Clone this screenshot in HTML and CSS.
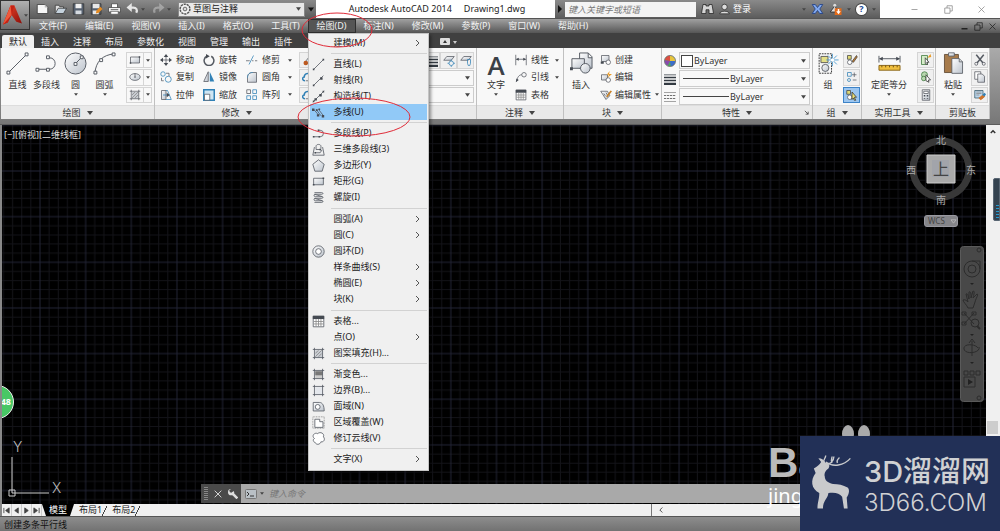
FILE: index.html
```html
<!DOCTYPE html>
<html lang="zh-CN">
<head>
<meta charset="utf-8">
<meta name="viewport" content="width=device-width, initial-scale=1">
<title>Autodesk AutoCAD 2014 Drawing1.dwg</title>
<link rel="stylesheet" href="styles.css">
</head>
<body>
<svg class="defs" aria-hidden="true">
  <defs>
    <linearGradient id="steel" x1="0" y1="0" x2="1" y2="1"><stop offset="0" stop-color="#fff"/><stop offset="1" stop-color="#bcc3cc"/></linearGradient>
    <linearGradient id="red" x1="0" y1="0" x2="1" y2="1"><stop offset="0" stop-color="#f0492c"/><stop offset="1" stop-color="#8a0d08"/></linearGradient>
    <symbol id="line" viewBox="0 0 16 16"><path d="M2 14 14 2" class="k"/><path d="M1 13h2v2H1zM13 1h2v2h-2z" class="n"/></symbol>
    <symbol id="bigline" viewBox="0 0 24 24"><path d="M3 21 21 3" class="k"/><path d="M1 20h3v3H1zM20 1h3v3h-3z" class="k w"/></symbol>
    <symbol id="bigpline" viewBox="0 0 24 24"><path d="M3 18h12c8 0 8-12 0-12h-1" class="k"/><path d="M1 17h3v3H1zM12 17h3v3h-3zM12 4h3v3h-3z" class="k w"/></symbol>
    <symbol id="ray" viewBox="0 0 16 16"><path d="M2 14 14 2" class="k"/><path d="M1 13h2v2H1zM10 4h3v3h-3z" class="n"/></symbol>
    <symbol id="xline" viewBox="0 0 16 16"><path d="M1 15 15 1" class="k"/><path d="M3 10h3v3H3zM9 5h3v3H9zM1 13h2v2H1zM13 1h2v2h-2z" class="n"/></symbol>
    <symbol id="mline" viewBox="0 0 16 16"><path d="M2 4l6 7M8 4l6 8M5 4l6 8" class="k"/><path d="M0 3h3v3H0zM5 4h2v2H5zM8 3h2v2H8zM6 10h3v3H6zM12 11h3v3h-3z" class="n"/></symbol>
    <symbol id="pline" viewBox="0 0 16 16"><path d="M2 12h8a4 4 0 0 0 0-8H8" class="k"/><path d="M1 11h2v2H1zM8 11h2v2H8zM7 3h2v2H7z" class="n"/></symbol>
    <symbol id="poly3d" viewBox="0 0 16 16"><path d="M3 5 1 15h14L13 5" class="k"/><path d="M4 12h6l2-3-3-1H5V4c0-3 6-3 6 0v3" class="k"/><path d="M3 11h2v2H3zM9 7h2v2H9z" class="n"/></symbol>
    <symbol id="polygon" viewBox="0 0 16 16"><path d="m8 1 7 5.500-2.500 8.500h-9L1 6.500z" class="k s"/></symbol>
    <symbol id="rect" viewBox="0 0 16 16"><path d="M2 4h12v8H2z" class="k s"/><path d="M1 11h2v2H1zM13 3h2v2h-2z" class="n"/></symbol>
    <symbol id="helix" viewBox="0 0 16 16"><path d="M3 2h9c2 0 2 2 0 2H4c-2 0-2 3 0 3h8c2 0 2 2 0 2H4c-2 0-2 3 0 3h8c2 0 2 2 0 2H3M3 4l10 3M3 9l10 3" class="k"/></symbol>
    <symbol id="donut" viewBox="0 0 16 16"><circle cx="8" cy="8" r="7" class="k s"/><circle cx="8" cy="8" r="3.500" class="k w"/></symbol>
    <symbol id="table" viewBox="0 0 16 16"><path d="M1.500 1.500h13v13h-13z" class="k w"/><path d="M1 1h14v4H1z" class="n"/><path d="M2 8h12M2 11h12M5 5v9M8 5v9M11 5v9" class="k t"/></symbol>
    <symbol id="hatch" viewBox="0 0 16 16"><path d="M4 4h9v9H4z" fill="#c8ccd2"/><path d="M1 3h14M1 13h14M3 1v14M13 1v14" class="k"/><path d="m4 8 4-4M4 12l8-8M8 12l4-4" class="k t"/></symbol>
    <symbol id="gradient" viewBox="0 0 16 16"><path d="M4 4h9v9H4z" fill="#ccc"/><path d="M4 4h9v5H4z" fill="#777"/><path d="M1 3h14M1 13h14M3 1v14M13 1v14" class="k"/></symbol>
    <symbol id="boundary" viewBox="0 0 16 16"><path d="M4 4h9v9H4z" fill="#e4e7ec"/><path d="M1 3h14M1 13h14M3 1v14M13 1v14" class="k"/></symbol>
    <symbol id="region" viewBox="0 0 16 16"><path d="M1.500 13.500V3H9c4 0 6 4 6 10.500z" class="k s"/><circle cx="7" cy="8.500" r="3" class="k w"/></symbol>
    <symbol id="wipe" viewBox="0 0 16 16"><path d="M1 1h14v14H1z" fill="none" stroke="#777" stroke-dasharray="1 1"/><path d="M3.500 4h6v3h4v7h-10z" class="k w"/></symbol>
    <symbol id="cloud" viewBox="0 0 16 16"><path d="M3 8C-1 5 3 0 7 2c3-3 9 0 7 4 3 3 0 7-3 6-1 4-6 4-7 1-3-1-3-4-1-5z" class="k w"/></symbol>
    <symbol id="bcloud" viewBox="0 0 16 16"><path d="M4 13C0 13 0 8 3 8c0-5 6-6 8-3 3 0 4 2 4 4" class="bl b2"/><path d="M5 13h8" class="k"/></symbol>
    <symbol id="circle" viewBox="0 0 24 24"><circle cx="12" cy="12" r="11" class="k s"/><path d="m12 12 6-6" class="k"/><path d="M10.500 11h3v3h-3zM17 4h3v3h-3z" class="k w"/></symbol>
    <symbol id="arc" viewBox="0 0 24 24"><path d="M2 22C3 10 10 3 22 2" class="k"/><path d="M1 20h3v3H1zM7 7h3v3H7zM20 1h3v3h-3z" class="k w"/></symbol>
    <symbol id="ellipse" viewBox="0 0 16 16"><ellipse cx="8" cy="8" rx="7" ry="4.500" class="k s"/><path d="M8 3v6M7 8h2" class="k"/></symbol>
    <symbol id="move" viewBox="0 0 16 16"><path d="M8 2v12M2 8h12" class="k"/><path d="m8 0 3 4H5zM8 16l3-4H5zM0 8l4-3v6zM16 8l-4-3v6z" class="n"/></symbol>
    <symbol id="rotate" viewBox="0 0 16 16"><path d="M5 3a6.500 6.500 0 1 0 6 0" class="k b2"/><path d="M4 0v6l5-3z" class="n"/></symbol>
    <symbol id="trim" viewBox="0 0 16 16"><path d="M0 9h5M8 9h2M12 9h3" class="k"/><path d="m4 14 6-12" class="bl"/></symbol>
    <symbol id="copy" viewBox="0 0 16 16"><circle cx="4" cy="4" r="3" class="bl"/><circle cx="11" cy="11" r="4" class="bl"/><path d="M8 3h4v4M2 9v4h3" class="k"/></symbol>
    <symbol id="mirror" viewBox="0 0 16 16"><path d="M7 1v13H1z" class="k s"/><path d="M9 1v13h6z" fill="#3181b6"/></symbol>
    <symbol id="fillet" viewBox="0 0 16 16"><path d="M2 15V9c0-5 3-7 7-7h5v13z" class="k s"/><path d="M2 9c0-5 3-7 7-7" class="bl"/></symbol>
    <symbol id="stretch" viewBox="0 0 16 16"><path d="M2 2h6v12H2z" class="k s"/><path d="M8 2h2l5 12H8M4 8h7" class="bl"/><path d="m9 5 4 3-4 3z" class="n"/></symbol>
    <symbol id="scale" viewBox="0 0 16 16"><path d="M1 1h14v14H1z" fill="#cfe6f4" stroke="#3181b6" stroke-width="2"/><path d="M2 7h7v8H2z" class="k w"/></symbol>
    <symbol id="array" viewBox="0 0 16 16"><path d="M1 1h5v5H1z" class="k"/><path d="M9 1h5v5H9zM1 9h5v5H1zM9 9h5v5H9z" class="bl"/></symbol>
    <symbol id="dim" viewBox="0 0 16 16"><path d="M1 1v14M15 1v14M2 7h12" class="k"/><path d="m1 7 4-2v4zM15 7l-4-2v4z" class="n"/></symbol>
    <symbol id="leader" viewBox="0 0 16 16"><path d="M2 14C3 9 5 5 9 5" class="k"/><circle cx="12" cy="5" r="3" class="k"/><path d="m1 15 1-5 3 2z" class="n"/></symbol>
    <symbol id="insert" viewBox="0 0 24 24"><path d="M10 1h9l4 4v12H10zM19 1v5h4" class="k s"/><path d="M2 7h13v10H2z" class="k s"/><circle cx="16" cy="17" r="5" class="k s"/><path d="M8 12h4M0 16h3v3H0z" class="n"/></symbol>
    <symbol id="create" viewBox="0 0 16 16"><path d="M2 2h10v8H2z" class="k s"/><circle cx="11" cy="11" r="3" class="k w"/><path d="M1 10h4v3H1z" class="n"/></symbol>
    <symbol id="edit" viewBox="0 0 16 16"><path d="M2 5h8v7H2z" class="k s"/><circle cx="11" cy="12" r="3" class="k w"/><path d="m13 0-4 5h3l-2 4 6-5h-4z" fill="#e99a23"/></symbol>
    <symbol id="attr" viewBox="0 0 16 16"><path d="m1 3 7 11 5-5-3-6z" class="k s"/><path d="m5 6 2 3M8 5l2 3" class="k"/><path d="m8 10 6-8 2 1-6 8z" fill="#c98228"/></symbol>
    <symbol id="wheel" viewBox="0 0 16 16"><circle cx="8" cy="8" r="7" fill="#4ea75d"/><path d="M8 8V1a7 7 0 0 1 7 7z" fill="#e9c43c"/><path d="M8 8h7a7 7 0 0 1-6 7z" fill="#3c6dcc"/><path d="M8 8V1a7 7 0 0 0-7 6z" fill="#dd4f41"/><path d="M8 8 1 7a7 7 0 0 0 4 7z" fill="#8a4aad"/><circle cx="8" cy="8" r="7.500" fill="none" stroke="#666"/></symbol>
    <symbol id="weights" viewBox="0 0 16 16"><path d="M0 2h16v1H0zM0 5h16v2H0zM0 9h16v2H0zM0 13h16v3H0z" fill="#333a42"/></symbol>
    <symbol id="types" viewBox="0 0 16 16"><path d="M0 2h16M0 14h16" class="k t"/><path d="M0 6h16M0 10h16" stroke="#444" stroke-dasharray="3 1"/></symbol>
    <symbol id="group" viewBox="0 0 24 26"><path d="M2 2h14v22H2z" fill="none" stroke="#222" stroke-dasharray="2 1"/><path d="M4 5h8v7H4z" fill="#e3df87" stroke="#555"/><circle cx="9" cy="18" r="4" class="k s"/><path d="m17 2 0 14M10 9h14M12 4l10 10M22 4 12 14" stroke="#4a9bd1"/><circle cx="17" cy="9" r="2" fill="#fff"/></symbol>
    <symbol id="gedit" viewBox="0 0 16 16"><path d="M2 2h5v5H2z" fill="#dfd976" stroke="#444"/><circle cx="5" cy="11" r="3" class="k w"/><path d="m8 10 6-8 1 2-5 7z" fill="#c37b27" stroke="#444"/></symbol>
    <symbol id="gplus" viewBox="0 0 16 16"><path d="M2 2h5v5H2z" class="bl"/><circle cx="4" cy="12" r="2" class="bl"/><path d="M11 2v6M8 5h6M9 12h5" class="k"/></symbol>
    <symbol id="gpick" viewBox="0 0 16 16"><path d="M1 2h5v5H1z" fill="#dfd976" stroke="#444"/><circle cx="5" cy="11" r="3" class="k w"/><path d="m8 4 6 7-3 0 2 4-2 0-1-3-2 2z" fill="#eee073" stroke="#333"/></symbol>
    <symbol id="measure" viewBox="0 0 24 16"><path d="M1 0v7M23 0v7M2 3h20" class="k"/><path d="m1 3 4-2v4zM23 3l-4-2v4z" class="n"/><path d="M1 10h22v5H1z" fill="#f0bf3e" stroke="#8a6518"/><path d="M4 10v2M8 10v2M12 10v2M16 10v2M20 10v2" stroke="#6f5217"/></symbol>
    <symbol id="qselect" viewBox="0 0 16 16"><path d="M2 2h8v12H2z" fill="#d6edc9" stroke="#39763a"/><path d="m7 5 5 6H9l1 3-3-1z" fill="#fff" stroke="#333"/><path d="m10 5 4-5 1 4z" fill="#e99a23"/></symbol>
    <symbol id="similar" viewBox="0 0 16 16"><circle cx="6" cy="5" r="4" fill="#b8d7af" stroke="#39763a"/><circle cx="5" cy="10" r="3" fill="#b8d7af" stroke="#39763a"/><path d="m8 5 6 7h-3l1 3-4-2z" fill="#fff" stroke="#333"/></symbol>
    <symbol id="calc" viewBox="0 0 16 16"><path d="M3 1h10v14H3z" class="k s"/><path d="M5 3h6v3H5z" class="k w"/><path d="M5 8h2v2H5zM9 8h2v2H9zM5 12h2v1H5zM9 12h2v1H9z" class="n"/></symbol>
    <symbol id="paste" viewBox="0 0 24 28"><path d="M1 3h17v22H1z" fill="#a77b4b" stroke="#5c4630"/><path d="M6 1h7v4H6z" class="k s"/><path d="M10 8h9l4 4v14H10zM19 8v4h4" class="k s"/></symbol>
    <symbol id="cut" viewBox="0 0 16 16"><path d="m3 1 9 11M13 1 4 12" class="k b2"/><circle cx="3" cy="13" r="2" class="k"/><circle cx="13" cy="13" r="2" class="k"/></symbol>
    <symbol id="pages" viewBox="0 0 16 16"><path d="M1 1h8v10H1z" class="k w"/><path d="M5 4h6l3 3v8H5z" class="k s"/></symbol>
    <symbol id="match" viewBox="0 0 16 16"><path d="M1 2h11v10H1z" fill="#bcd7ed" stroke="#356"/><path d="M3 4h7M3 6h7M3 8h4" class="k t"/><path d="m6 12 5-4 4 2-6 5z" fill="#d0742b"/><path d="m11 8 3-3 2 2-2 3z" fill="#3181b6"/></symbol>
    <symbol id="laygear" viewBox="0 0 16 16"><path d="m1 7 4-5h10l-4 5z" class="k s"/><circle cx="11" cy="11" r="3" class="bl"/><path d="M11 6v2M11 14v2M6 11h2M14 11h2" class="bl"/></symbol>
    <symbol id="laybulb" viewBox="0 0 16 16"><path d="m1 7 4-5h10l-4 5z" class="k s"/><path d="M10 6h4v5l-1 3h-2l-1-3z" class="bl"/></symbol>
    <symbol id="gear" viewBox="0 0 16 16"><circle cx="8" cy="8" r="6.500" fill="#f2f2f2" stroke="#555" stroke-width="2" stroke-dasharray="3 1"/><circle cx="8" cy="8" r="2.500" fill="#ddd" stroke="#444"/></symbol>
    <symbol id="new" viewBox="0 0 16 16"><path d="M1 2h10l4 4v8H1z" fill="#f6f6f6" stroke="#333"/><path d="M11 2v4h4" fill="#bbb"/></symbol>
    <symbol id="open" viewBox="0 0 16 16"><path d="M1 14V3h5l1 2h5v3" fill="#ddd" stroke="#333"/><path d="m1 14 4-7h11l-4 7z" fill="#c5d2dd" stroke="#333"/></symbol>
    <symbol id="save" viewBox="0 0 16 16"><path d="M1 1h14v14H1z" fill="#56606f" stroke="#333"/><path d="M4 1h8v6H4z" fill="#f0f0f0"/><path d="M4 10h8v5H4z" fill="#d5dae0"/></symbol>
    <symbol id="saveas" viewBox="0 0 16 16"><path d="M1 1h13v14H1z" fill="#56606f" stroke="#333"/><path d="M3 1h9v6H3zM3 10h8v5H3z" fill="#e8e8e8"/><path d="m7 14 1-4 5-5 3 3-5 5z" fill="#e48b22"/></symbol>
    <symbol id="print" viewBox="0 0 16 16"><path d="M4 1h8v6H4z" fill="#fff" stroke="#444"/><path d="M0 6h16v6H0z" fill="#eee" stroke="#444"/><path d="M3 8h10v1H3z" fill="#555"/><path d="M3 11h10v4H3z" fill="#fff" stroke="#555"/></symbol>
    <symbol id="undo" viewBox="0 0 16 16"><path d="M4 6h5c4 0 6 3 4 7" fill="none" stroke="#e6e6e6" stroke-width="3"/><path d="M0 6 7 0v12z" fill="#e6e6e6"/></symbol>
    <symbol id="find" viewBox="0 0 16 16"><path d="M2 2h4v2h4V2h4l2 12h-6V9H6v5H0z" fill="#d5d5d5" stroke="#222"/></symbol>
    <symbol id="user" viewBox="0 0 16 16"><circle cx="8" cy="5" r="4" fill="#ddd" stroke="#222"/><path d="M1 15c0-5 14-5 14 0z" fill="#ddd" stroke="#222"/></symbol>
    <symbol id="exchange" viewBox="0 0 16 16"><path d="M1 2h4l3 4 3-4h4l-4 6 4 6h-4l-3-4-3 4H1l4-6z" fill="#82a9ed" stroke="#173781"/></symbol>
    <symbol id="app360" viewBox="0 0 16 16"><path d="m1 12 6-8 5 8z" fill="#ddd" stroke="#222"/><circle cx="7" cy="3" r="2" fill="#ddd"/><path d="M7 7h9v9H7z" fill="#e46b19"/><path d="M11 8h2v3h2l-3 4-3-4h2z" fill="#fff"/></symbol>
    <symbol id="brush" viewBox="0 0 16 16"><path d="m3 12 8-10 3 2-8 10z" class="k s"/><circle cx="5" cy="12" r="3" fill="#bd5a20"/></symbol>
    <symbol id="wrench" viewBox="0 0 16 16"><path d="m6 6 9 9" stroke="#ddd" stroke-width="4"/><path d="M5 0a5 5 0 1 0 5 5L9 3 6 6 3 5 2 2z" fill="#ddd"/></symbol>
    <symbol id="down" viewBox="0 0 6 4"><path d="M0 0h6L3 4z" fill="currentColor"/></symbol>
    <symbol id="chev" viewBox="0 0 6 8"><path d="m1 1 3 3-3 3" fill="none" stroke="#555"/></symbol>
    <symbol id="restore" viewBox="0 0 12 12"><path d="M1 4h7v7H1zM4 4V1h7v7H8" fill="none" stroke="currentColor"/></symbol>
    <symbol id="x" viewBox="0 0 12 12"><path d="m2 2 8 8M10 2l-8 8" fill="none" stroke="currentColor"/></symbol>
    <pattern id="grid" x="37" y="45" width="45.650" height="45.650" patternUnits="userSpaceOnUse">
      <path d="M10.100 0v46M19.300 0v46M28.400 0v46M37.500 0v46M0 10.100h46M0 19.300h46M0 28.400h46M0 37.500h46" stroke="#131318"/>
      <path d="M1 0v46M0 1h46" stroke="#222435"/>
    </pattern>
  </defs>
</svg>

<div class="app">
  <header class="titlebar">
    <div class="quick">
      <button class="appbtn" aria-label="应用程序菜单"><svg viewBox="0 0 20 20"><path d="M8 0h4l8 19-6-2-5-7-4 8-5 2z" fill="url(#red)"/><path d="M8 0h4L9 10l-4 8-5 2z" fill="#c52214"/><path d="m8 0 1 10-9 10z" fill="#ee5a3c"/></svg><svg class="dn"><use href="#down"/></svg></button>
      <button class="ico" aria-label="新建"><svg><use href="#new"/></svg></button>
      <button class="ico" aria-label="打开"><svg><use href="#open"/></svg></button>
      <button class="ico" aria-label="保存"><svg><use href="#save"/></svg></button>
      <button class="ico" aria-label="另存为"><svg><use href="#saveas"/></svg></button>
      <button class="ico" aria-label="打印"><svg><use href="#print"/></svg></button>
      <button class="ico" aria-label="放弃"><svg><use href="#undo"/></svg></button>
      <svg class="dn"><use href="#down"/></svg>
      <button class="ico redo" aria-label="重做"><svg><use href="#undo"/></svg></button>
      <svg class="dn"><use href="#down"/></svg>
      <div class="combo workspace"><select aria-label="工作空间"><option>草图与注释</option></select><svg class="lead"><use href="#gear"/></svg><svg class="dn"><use href="#down"/></svg></div>
      <svg class="dn more"><use href="#down"/></svg>
    </div>
    <h1 class="title"><span>Autodesk AutoCAD 2014</span><span>Drawing1.dwg</span></h1>
    <div class="info">
      <svg class="play" viewBox="0 0 6 8"><path d="m1 0 4 4-4 4z" fill="#111"/></svg>
      <input class="search" type="text" aria-label="搜索" placeholder="键入关键字或短语">
      <button class="ico" aria-label="查找"><svg><use href="#find"/></svg></button>
      <button class="login"><svg><use href="#user"/></svg>登录</button>
      <svg class="dn push"><use href="#down"/></svg>
      <button class="ico" aria-label="Exchange"><svg><use href="#exchange"/></svg></button>
      <button class="ico" aria-label="Autodesk 360"><svg><use href="#app360"/></svg></button>
      <svg class="dn"><use href="#down"/></svg>
      <button class="help" aria-label="帮助">?</button>
      <svg class="dn"><use href="#down"/></svg>
    </div>
    <div class="win">
      <button aria-label="最小化"><svg viewBox="0 0 12 12"><path d="M2 6h8" stroke="currentColor"/></svg></button>
      <button aria-label="还原"><svg><use href="#restore"/></svg></button>
      <button aria-label="关闭"><svg><use href="#x"/></svg></button>
    </div>
  </header>

  <nav class="menubar">
    <button>文件(F)</button><button>编辑(E)</button><button>视图(V)</button><button>插入(I)</button><button>格式(O)</button><button>工具(T)</button>
    <div class="holder">
      <button class="open" aria-expanded="true">绘图(D)</button>
      <div class="popup" role="menu">
        <div class="grp"><button>建模(M)<svg class="ch"><use href="#chev"/></svg></button></div>
        <div class="grp">
          <button><svg><use href="#line"/></svg>直线(L)</button>
          <button><svg><use href="#ray"/></svg>射线(R)</button>
          <button><svg><use href="#xline"/></svg>构造线(T)</button>
          <button class="hot"><svg><use href="#mline"/></svg>多线(U)</button>
        </div>
        <div class="grp">
          <button><svg><use href="#pline"/></svg>多段线(P)</button>
          <button><svg><use href="#poly3d"/></svg>三维多段线(3)</button>
          <button><svg><use href="#polygon"/></svg>多边形(Y)</button>
          <button><svg><use href="#rect"/></svg>矩形(G)</button>
          <button><svg><use href="#helix"/></svg>螺旋(I)</button>
        </div>
        <div class="grp loose">
          <button>圆弧(A)<svg class="ch"><use href="#chev"/></svg></button>
          <button>圆(C)<svg class="ch"><use href="#chev"/></svg></button>
          <button><svg><use href="#donut"/></svg>圆环(D)</button>
          <button>样条曲线(S)<svg class="ch"><use href="#chev"/></svg></button>
          <button>椭圆(E)<svg class="ch"><use href="#chev"/></svg></button>
          <button>块(K)<svg class="ch"><use href="#chev"/></svg></button>
        </div>
        <div class="grp loose">
          <button><svg><use href="#table"/></svg>表格...</button>
          <button>点(O)<svg class="ch"><use href="#chev"/></svg></button>
          <button><svg><use href="#hatch"/></svg>图案填充(H)...</button>
        </div>
        <div class="grp">
          <button><svg><use href="#gradient"/></svg>渐变色...</button>
          <button><svg><use href="#boundary"/></svg>边界(B)...</button>
          <button><svg><use href="#region"/></svg>面域(N)</button>
          <button><svg><use href="#wipe"/></svg>区域覆盖(W)</button>
          <button><svg><use href="#cloud"/></svg>修订云线(V)</button>
        </div>
        <div class="grp"><button>文字(X)<svg class="ch"><use href="#chev"/></svg></button></div>
      </div>
      <svg class="marks" viewBox="0 0 130 130"><ellipse cx="43" cy="11" rx="35" ry="17"/><ellipse cx="60" cy="98" rx="56" ry="19"/></svg>
    </div>
    <button>标注(N)</button><button>修改(M)</button><button>参数(P)</button><button>窗口(W)</button><button>帮助(H)</button>
    <div class="docwin">
      <button aria-label="最小化图形"><svg viewBox="0 0 12 12"><path d="M2 9h8" stroke="currentColor" stroke-width="2"/></svg></button>
      <button aria-label="还原图形"><svg><use href="#restore"/></svg></button>
      <button aria-label="关闭图形"><svg><use href="#x"/></svg></button>
    </div>
  </nav>

  <nav class="tabs">
    <button class="on">默认</button><button>插入</button><button>注释</button><button>布局</button><button>参数化</button><button>视图</button><button>管理</button><button>输出</button><button>插件</button>
    <button class="mini" aria-label="最小化功能区"><svg viewBox="0 0 18 8"><rect width="10" height="7" rx="1" fill="#ddd"/><path d="m3 5 2-3 2 3z" fill="#333"/><path d="M13 3h4l-2 3z" fill="#ccc"/></svg></button>
  </nav>

  <main class="ribbon">
    <section class="panel draw">
      <div class="tools">
        <button class="big"><svg><use href="#bigline"/></svg>直线</button>
        <button class="big"><svg><use href="#bigpline"/></svg>多段线</button>
        <button class="big"><svg><use href="#circle"/></svg>圆<svg class="dn"><use href="#down"/></svg></button>
        <button class="big"><svg><use href="#arc"/></svg>圆弧<svg class="dn"><use href="#down"/></svg></button>
        <div class="col end">
          <button class="split" aria-label="矩形"><svg><use href="#rect"/></svg><span><svg class="dn"><use href="#down"/></svg></span></button>
          <button class="split" aria-label="椭圆"><svg><use href="#ellipse"/></svg><span><svg class="dn"><use href="#down"/></svg></span></button>
          <button class="split" aria-label="图案填充"><svg><use href="#hatch"/></svg><span><svg class="dn"><use href="#down"/></svg></span></button>
        </div>
      </div>
      <h2>绘图<svg class="dn"><use href="#down"/></svg></h2>
    </section>
    <section class="panel modify">
      <div class="tools">
        <div class="col third"><button class="row"><svg><use href="#move"/></svg>移动</button><button class="row"><svg><use href="#copy"/></svg>复制</button><button class="row"><svg><use href="#stretch"/></svg>拉伸</button></div>
        <div class="col third"><button class="row"><svg><use href="#rotate"/></svg>旋转</button><button class="row"><svg><use href="#mirror"/></svg>镜像</button><button class="row"><svg><use href="#scale"/></svg>缩放</button></div>
        <div class="col wide"><button class="row"><svg><use href="#trim"/></svg>修剪<svg class="dn"><use href="#down"/></svg></button><button class="row"><svg><use href="#fillet"/></svg>圆角<svg class="dn"><use href="#down"/></svg></button><button class="row"><svg><use href="#array"/></svg>阵列<svg class="dn"><use href="#down"/></svg></button></div>
        <div class="col"><button class="sq" aria-label="删除"><svg><use href="#brush"/></svg></button><button class="sq" aria-label="分解"><svg><use href="#bcloud"/></svg></button><button class="sq" aria-label="偏移"><svg><use href="#bcloud"/></svg></button></div>
      </div>
      <h2>修改<svg class="dn"><use href="#down"/></svg></h2>
    </section>
    <section class="panel layers">
      <div class="tools">
        <div class="col fill">
          <div class="pair"><button class="sq" aria-label="匹配图层"><svg><use href="#weights"/></svg></button><button class="sq" aria-label="图层设置"><svg><use href="#laygear"/></svg></button><button class="sq" aria-label="图层开关"><svg><use href="#laybulb"/></svg></button></div>
          <div class="combo"><select aria-label="图层状态"><option></option></select><svg class="dn"><use href="#down"/></svg></div>
          <div class="combo"><select aria-label="图层"><option></option></select><svg class="dn"><use href="#down"/></svg></div>
        </div>
      </div>
      <h2></h2>
    </section>
    <section class="panel note">
      <div class="tools">
        <button class="big"><b>A</b>文字<svg class="dn"><use href="#down"/></svg></button>
        <div class="col fill"><button class="row"><svg><use href="#dim"/></svg>线性<svg class="dn"><use href="#down"/></svg></button><button class="row"><svg><use href="#leader"/></svg>引线<svg class="dn"><use href="#down"/></svg></button><button class="row"><svg><use href="#table"/></svg>表格</button></div>
      </div>
      <h2>注释<svg class="dn"><use href="#down"/></svg></h2>
    </section>
    <section class="panel block">
      <div class="tools">
        <button class="big"><svg><use href="#insert"/></svg>插入</button>
        <div class="col fill"><button class="row"><svg><use href="#create"/></svg>创建</button><button class="row"><svg><use href="#edit"/></svg>编辑</button><button class="row"><svg><use href="#attr"/></svg>编辑属性<svg class="dn"><use href="#down"/></svg></button></div>
      </div>
      <h2>块<svg class="dn"><use href="#down"/></svg></h2>
    </section>
    <section class="panel props">
      <div class="tools">
        <div class="col fill">
          <label class="prop"><svg><use href="#wheel"/></svg><span class="combo color"><select aria-label="颜色"><option>ByLayer</option></select><i class="lead"></i><svg class="dn"><use href="#down"/></svg></span></label>
          <label class="prop"><svg><use href="#weights"/></svg><span class="combo stroke"><select aria-label="线宽"><option>ByLayer</option></select><i class="lead"></i><svg class="dn"><use href="#down"/></svg></span></label>
          <label class="prop"><svg><use href="#types"/></svg><span class="combo stroke"><select aria-label="线型"><option>ByLayer</option></select><i class="lead"></i><svg class="dn"><use href="#down"/></svg></span></label>
        </div>
      </div>
      <h2>特性<svg class="dn"><use href="#down"/></svg><svg class="launch" viewBox="0 0 6 6"><path d="m1 1 4 4M5 2v3H2" fill="none" stroke="#444"/></svg></h2>
    </section>
    <section class="panel groups">
      <div class="tools">
        <button class="big"><svg><use href="#group"/></svg>组</button>
        <div class="col end"><button class="sq" aria-label="组编辑"><svg><use href="#gedit"/></svg></button><button class="sq" aria-label="解除编组"><svg><use href="#gplus"/></svg></button><button class="sq on" aria-label="组选择"><svg><use href="#gpick"/></svg></button></div>
      </div>
      <h2>组<svg class="dn"><use href="#down"/></svg></h2>
    </section>
    <section class="panel utils">
      <div class="tools">
        <button class="big"><svg><use href="#measure"/></svg>定距等分<svg class="dn"><use href="#down"/></svg></button>
        <div class="col end"><button class="sq" aria-label="快速选择"><svg><use href="#qselect"/></svg></button><button class="sq" aria-label="选择类似"><svg><use href="#similar"/></svg></button><button class="sq" aria-label="计算器"><svg><use href="#calc"/></svg></button></div>
      </div>
      <h2>实用工具<svg class="dn"><use href="#down"/></svg></h2>
    </section>
    <section class="panel clip">
      <div class="tools">
        <button class="big"><svg><use href="#paste"/></svg>粘贴<svg class="dn"><use href="#down"/></svg></button>
        <div class="col end"><button class="sq" aria-label="剪切"><svg><use href="#cut"/></svg></button><button class="sq" aria-label="复制"><svg><use href="#pages"/></svg></button><button class="sq" aria-label="特性匹配"><svg><use href="#match"/></svg></button></div>
      </div>
      <h2>剪贴板</h2>
    </section>
  </main>

  <section class="work">
    <div class="view">
      <svg class="gridlines" width="100%" height="100%"><rect width="100%" height="100%" fill="url(#grid)"/></svg>
      <div class="vlabel">[−][俯视][二维线框]</div>
      <div class="cube">
        <svg viewBox="0 0 76 76"><circle cx="38" cy="38" r="28" fill="none" stroke="#383838" stroke-width="7"/><path d="M24 24h28v28H24z" fill="#aaa" stroke="#ccc"/><path d="M29 29h17v17H29z" fill="#a2a4aa"/></svg>
        <span class="n1">北</span><span class="w1">西</span><span class="up">上</span><span class="e1">东</span><span class="s1">南</span>
      </div>
      <button class="wcs">WCS<svg viewBox="0 0 8 6"><path d="M1 1h6L4 5z" fill="none" stroke="#bbb"/></svg></button>
      <svg class="navbar" viewBox="0 0 24 156"><rect x="0.500" y="0.500" width="23" height="155" rx="3" fill="#484848" stroke="#5a5a5a"/><g fill="none" stroke="#2c2c2c"><circle cx="19" cy="4" r="2"/><circle cx="12" cy="23" r="8"/><circle cx="12" cy="23" r="4"/><path d="M12 15h8v8"/><path d="M8 62c-1-3-5-6-5-8 2-1 4 1 5 2l-2-8c2-1 2 2 3 5l0-7c2-1 2 2 2 6l2-7c2 0 1 3 0 7l4-4c2 0-1 4-2 8l-2 6z"/><path d="M4 67l10 11M14 67 4 78M2 66h4v3H2zM12 66h4v3h-4zM2 76h4v3H2z"/><circle cx="15" cy="77" r="4"/><path d="m17 80 3 3" stroke-width="2"/><path d="M12 110V95M9 97l3-4 3 4M19 101c2 6-14 8-15 2s12-5 14-1"/><path d="M4 125h4v4H4zM10 125h4v4h-4zM16 125h4v4h-4zM4 131h11v10H4z"/><circle cx="19" cy="152" r="2"/></g><path d="M10 37h4l-2 2zM10 88h4l-2 2zM10 116h4l-2 2zM8 133l5 3-5 3z" fill="#222"/></svg>
      <svg class="ucs" viewBox="0 0 60 60"><path d="M7 50V14M7 50h37M4 47h6v6H4z" fill="none" stroke="#ccc"/><text x="8" y="9">Y</text><text x="47" y="50">X</text></svg>
      <div class="badge">48</div>
      <div class="cmd">
        <div class="grip"><i></i><button aria-label="关闭命令行"><svg><use href="#x"/></svg></button><button aria-label="自定义"><svg><use href="#wrench"/></svg></button></div>
        <label class="prompt" for="cmd"><svg viewBox="0 0 12 10"><rect x="0.500" y="0.500" width="11" height="9" rx="1" fill="#b9c0c6" stroke="#777"/><path d="m2 3 2 2-2 2M5 7h4" fill="none" stroke="#333"/></svg><svg class="dn"><use href="#down"/></svg></label>
        <input id="cmd" type="text" placeholder="键入命令">
      </div>
    </div>
    <div class="vscroll"><svg viewBox="0 0 8 6"><path d="m1 5 3-3 3 3" fill="none" stroke="#333" stroke-width="2"/></svg><i class="thumb"></i></div>
    <div class="sidegrip"></div>
  </section>

  <nav class="sheets">
    <div class="step"><button aria-label="第一个"><svg viewBox="0 0 8 8"><path d="M1 1v6M7 1 3 4l4 3z"/></svg></button><button aria-label="上一个"><svg viewBox="0 0 8 8"><path d="M6 1 2 4l4 3z"/></svg></button><button aria-label="下一个"><svg viewBox="0 0 8 8"><path d="m2 1 4 3-4 3z"/></svg></button><button aria-label="最后一个"><svg viewBox="0 0 8 8"><path d="M7 1v6M1 1l4 3-4 3z"/></svg></button></div>
    <button class="sheet on">模型</button><button class="sheet">布局1</button><button class="sheet">布局2</button>
    <div class="hscroll"><svg viewBox="0 0 6 8"><path d="M4 1 1 4l3 3" fill="none" stroke="#333"/></svg></div>
  </nav>
  <footer class="status">创建多条平行线</footer>

  <div class="water"><i></i><i></i><b>Ba</b><span>jing</span></div>
  <aside class="brand">
    <svg viewBox="0 0 46 60"><path d="M2 14c4-2 6-4 8-7l-3-4c4 0 6 2 8 5 4 0 5 3 3 6-3 2-5 5-4 9 0 4 3 7 9 8 6 0 11 1 16 4 3 3 1 8-1 11l1 12h-4l-2-13c-3-4-8-5-15-4-1 7-6 8-6 17H6c0-7 2-10 2-17C-1 36-2 27 4 19z" fill="#c9cacc"/><path d="M13 8C12 3 15 4 15 0M15 8c4 3 9-2 9-7M15 7c8 6 20 4 27-4M22 8c-2-3 0-5 0-7M28 8c-2-3 1-4 2-6" fill="none" stroke="#c9cacc" stroke-width="1.500"/></svg>
    <div><strong>3D溜溜网</strong><span>3D66.COM</span></div>
  </aside>
</div>
</body>
</html>
```
FILE: styles.css
```css
* { box-sizing: border-box; }
body {
  margin: 0;
  background: #777;
  font: 9px/12px "Noto Sans", "Noto Sans CJK SC", sans-serif;
  color: #333;
}
button, input, select { font: inherit; color: inherit; margin: 0; padding: 0; border: 0; background: none; border-radius: 0; }
button { display: flex; align-items: center; white-space: nowrap; }
svg { display: block; flex: none; overflow: visible; }
h1, h2 { margin: 0; font: inherit; }
.defs { position: absolute; width: 0; height: 0; }
.k { fill: none; stroke: #555a62; }
.k.s { fill: url(#steel); }
.k.w { fill: #fff; }
.k.t { stroke: #888; }
.k.b2, .bl.b2 { stroke-width: 2; }
.n { fill: #454a52; }
.bl { fill: none; stroke: #3181b6; }
.dn { width: 4px; height: 3px; color: #444; }

.app { position: relative; display: flex; flex-direction: column; height: 100vh; min-height: 500px; overflow: hidden; }

.titlebar { position: relative; display: flex; height: 18px; background: #fff; }
.quick { display: flex; align-items: center; gap: 5px; width: 316px; padding-left: 36px; background: linear-gradient(#8a8a8a, #5c5c5c); }
.appbtn { position: absolute; left: 0; top: 0; z-index: 6; width: 30px; height: 30px; padding-left: 2px; gap: 2px; border: 1px solid #333; background: linear-gradient(#b0b0b0, #6c6c6c); }
.appbtn svg:first-child { width: 19px; height: 20px; }
.ico svg { width: 13px; height: 12px; }
.quick > .dn { margin-left: -3px; margin-right: 2px; }
.redo { transform: scaleX(-1); opacity: .4; }
.combo { display: grid; align-items: center; }
.combo > * { grid-area: 1 / 1; }
.combo select { appearance: none; width: 100%; height: 100%; outline: 0; }
.combo .dn { justify-self: end; width: 5px; height: 4px; margin-right: 3px; pointer-events: none; }
.lead { pointer-events: none; }
.workspace { flex: 1; height: 15px; border: 1px solid #888; background: #e8e8e8; }
.workspace select { padding-left: 14px; color: #222; }
.workspace .lead { width: 12px; height: 12px; }
.quick > .more { width: 6px; height: 5px; margin: 0 2px 0 -2px; color: #111; }
.title { display: flex; flex: 1; gap: 12px; align-items: center; justify-content: center; padding-left: 3px; white-space: nowrap; color: #222; }
.info { display: flex; align-items: center; gap: 5px; width: 325px; padding-right: 4px; background: linear-gradient(#8a8a8a, #5c5c5c); color: #fff; }
.play { width: 6px; height: 8px; margin-left: 2px; }
.search { width: 131px; height: 15px; margin-left: -3px; padding-left: 3px; background: #f4f4f4; color: #333; }
::placeholder { color: #777; font-style: italic; opacity: 1; }
.login { gap: 3px; }
.login svg { width: 11px; height: 12px; }
.push { margin-left: auto; }
.help { justify-content: center; width: 11px; height: 11px; border-radius: 50%; background: #fff; color: #174895; font-weight: bold; box-shadow: 0 0 0 1px #444; }
.win { display: flex; width: 120px; justify-content: space-between; color: #888; padding: 0 14px 0 30px; }
.win svg { width: 9px; height: 9px; }

.menubar { display: flex; height: 15px; padding-left: 30px; background: linear-gradient(#a0a0a0, #565656); color: #f2f2f2; border-top: 1px solid #555; }
.menubar > button, .holder > button { height: 14px; padding: 0 9px; }
.holder { position: relative; z-index: 5; margin: 0 -1px; }
.holder > .open { background: #555; box-shadow: inset 0 0 0 1px #2e2e2e; }
.popup { position: absolute; left: 0; top: 14px; width: 121px; padding: 1px 1px 3px; background: #f0f0f0; border: 1px solid #c4c4c4; color: #222; box-shadow: 2px 2px 3px #0006; }
.popup button { position: relative; width: 100%; height: 16px; padding-left: 24px; }
.popup button svg { position: absolute; left: 2px; width: 13px; height: 13px; }
.popup button .ch { left: auto; right: 6px; width: 6px; height: 8px; }
.popup .hot { background: #91c9f7; }
.grp + .grp { margin-top: 2px; padding-top: 3px; background: linear-gradient(#d2d2d2, #d2d2d2) 21px 0 / 100% 1px no-repeat; }
.grp + .loose { margin-top: 3px; }
.marks { position: absolute; left: -14px; top: 0; width: 130px; height: 130px; fill: none; stroke: #e02b38; pointer-events: none; }
.docwin { display: flex; gap: 5px; margin-left: auto; padding-right: 3px; color: #222; }
.docwin svg { width: 9px; height: 9px; }

.tabs { display: flex; align-items: flex-end; height: 15px; padding-left: 2px; background: #404040; color: #eee; }
.tabs button { height: 13px; padding: 0 7px; }
.tabs .on { background: #f0f0f0; color: #222; border-radius: 2px 2px 0 0; }
.tabs .mini { margin-left: 134px; }
.mini svg { width: 18px; height: 8px; }

.ribbon { display: flex; height: 77px; padding: 0 10px 5px 1px; background: linear-gradient(#aaa, #777); border-bottom: 1px solid #5c5c5c; }
.panel { display: flex; flex-direction: column; flex: none; background: #f8f8f8; border-right: 1px solid #c0c0c0; }
.tools { display: flex; flex: 1; min-height: 0; padding: 4px 2px 2px; }
.panel h2 { position: relative; display: flex; align-items: center; justify-content: center; gap: 6px; height: 14px; background: #e9e9e9; border-top: 1px solid #ddd; }
.panel h2 .dn { width: 6px; height: 4px; }
.big { flex-direction: column; justify-content: flex-start; flex: none; width: 30px; line-height: 12px; }
.big > svg:first-child { width: 23px; height: 23px; margin: 0 0 4px; }
.big > b { height: 27px; font: 600 26px/26px "Open Sans", sans-serif; color: #3b4047; }
.big .dn { margin-top: 2px; }
.draw .big { width: 29px; }
.col { display: flex; flex-direction: column; gap: 1px; }
.end { margin-left: auto; }
.fill { flex: 1; }
.row { height: 17px; gap: 4px; }
.row > svg:first-child { width: 12px; height: 12px; }
.row .dn { margin-left: auto; }
.split { width: 26px; height: 17px; border: 1px solid #d5d5d5; }
.split > svg { width: 16px; height: 12px; }
.split span { display: flex; flex: 1; height: 100%; align-items: center; justify-content: center; border-left: 1px solid #d5d5d5; }
.sq { justify-content: center; width: 17px; height: 17px; border: 1px solid #d5d5d5; background: #f0f0f0; }
.sq svg { width: 12px; height: 12px; }
.sq.on { background: #9cc6f0; border-color: #3d83c7; }
.draw { width: 154px; }
.modify { width: 164px; }
.modify .tools { padding-left: 5px; }
.third { width: 43px; }
.wide { width: 46px; margin-right: 7px; }
.layers { flex: 1; }
.pair { display: flex; justify-content: flex-end; }
.col > .combo, .prop .combo { height: 17px; border: 1px solid #ccc; background: #f8f8f8; }
.note { width: 87px; }
.note .tools { padding: 4px 4px 2px; }
.note .col, .block .col { padding-left: 4px; }
.block { width: 98px; }
.block .row { gap: 3px; }
.props { width: 151px; }
.prop { display: grid; grid-template-columns: 12px 1fr; gap: 3px; align-items: center; }
.prop > svg { width: 12px; height: 12px; }
.color select { padding-left: 14px; }
.color .lead { width: 12px; height: 12px; border: 1px solid #444; background: #fff; margin-left: 1px; }
.stroke select { padding-left: 50px; }
.stroke .lead { width: 46px; height: 1px; margin-left: 3px; background: #444; }
.launch { position: absolute; right: 3px; width: 5px; height: 5px; }
.groups { width: 49px; }
.groups .big { width: 26px; }
.groups .big > svg:first-child { width: 26px; }
.utils { width: 74px; }
.utils .big { width: 50px; }
.clip { width: 54px; }
.groups .tools, .utils .tools, .clip .tools { padding-right: 1px; }

.work { position: relative; display: grid; grid-template-columns: 1fr 14px; flex: 1; min-height: 0; }
.view { position: relative; background: #000; border-left: 2px solid #888; overflow: hidden; }
.gridlines { position: absolute; inset: 0; }
.vlabel { position: absolute; left: 2px; top: 4px; color: #ddd; }
.cube { position: absolute; right: 7px; top: 6px; width: 76px; height: 76px; color: #aaa; font-size: 10px; }
.cube span { position: absolute; }
.cube .n1 { left: 33px; top: 3px; }
.cube .w1 { left: 3px; top: 33px; }
.cube .e1 { left: 63px; top: 33px; }
.cube .s1 { left: 33px; top: 63px; }
.cube .up { left: 30px; top: 30px; color: #444; font-size: 16px; line-height: 16px; }
.wcs { position: absolute; right: 28px; top: 90px; width: 34px; height: 12px; padding-left: 3px; gap: 5px; background: #858589; border: 1px solid #9999a0; border-radius: 3px; color: #444; font-size: 8px; }
.wcs svg { width: 7px; height: 5px; }
.navbar { position: absolute; right: 2px; top: 121px; width: 24px; height: 156px; }
.ucs { position: absolute; left: 3px; bottom: 1px; width: 60px; height: 60px; }
.ucs text { font: 300 14px "Inter", sans-serif; fill: #bbb; }
.badge { position: absolute; left: -22px; top: 260px; width: 34px; height: 34px; padding-right: 2px; border: 1px solid #eee; border-radius: 50%; background: #48c765; color: #fff; font-weight: bold; line-height: 32px; text-align: right; }
.cmd { position: absolute; left: 199px; right: 0; bottom: 1px; display: flex; height: 19px; background: #a9a9a9; }
.grip { display: flex; align-items: center; gap: 5px; width: 40px; padding-left: 3px; background: #4a4a4a; color: #eee; }
.grip i { width: 4px; height: 13px; background: repeating-linear-gradient(#888 0 1px, #444 1px 2px); }
.grip svg { width: 10px; height: 10px; }
.prompt { display: flex; align-items: center; gap: 3px; padding: 0 5px 0 4px; }
.prompt svg:first-child { width: 12px; height: 10px; }
.cmd input { flex: 1; min-width: 0; outline: 0; }
.vscroll { display: flex; flex-direction: column; align-items: center; background: #f0f0f0; padding: 4px 1px 70px 0; }
.vscroll svg { width: 6px; height: 5px; }
.thumb { width: 11px; height: 13px; margin-top: auto; background: #cdcdcd; }
.sidegrip { position: absolute; right: 0; top: 53px; width: 7px; height: 43px; border: 1px solid #596673; border-radius: 2px 0 0 2px; background: repeating-linear-gradient(#2599cf 0 1px, #34424f 1px 3px) 2px 26px / 3px 13px no-repeat, #34424f; }

.sheets { display: flex; height: 12px; background: #f0f0f0; border-left: 2px solid #888; }
.step { display: flex; }
.step button { justify-content: center; width: 10px; border-right: 1px solid #ccc; }
.step svg { width: 7px; height: 7px; fill: #444; stroke: #444; stroke-width: 1; }
.sheet { padding: 0 5px; height: 12px; color: #222; background: linear-gradient(118deg, transparent calc(100% - 5px), #444 0 calc(100% - 4px), transparent 0); }
.sheet.on { padding: 0 7px; background: #000; color: #fff; clip-path: polygon(0 0, 100% 0, calc(100% - 4px) 100%, 4px 100%); }
.hscroll { display: flex; align-items: center; width: 35%; margin-left: auto; padding-left: 7px; border-left: 1px solid #777; background: #f0f0f0; }
.hscroll svg { width: 5px; height: 8px; }
.status { height: 15px; padding: 2px 4px 0; line-height: 12px; background: linear-gradient(#8d8d8d, #727272); border-top: 1px solid #555; color: #111; }

.brand { position: absolute; right: 0; bottom: 0; z-index: 8; display: flex; gap: 10px; width: 200px; height: 95px; padding: 18px 0 0 12px; background: #223057; color: #d0d1d3; }
.brand svg { width: 42px; height: 58px; }
.brand strong { display: block; font: 500 29px/36px "Inter", "Noto Sans CJK SC", sans-serif; white-space: nowrap; }
.brand span { display: block; font: 300 24px/26px "Inter", sans-serif; }
.water { position: absolute; right: 120px; bottom: 20px; width: 112px; height: 90px; color: #bbb; }
.water b { position: absolute; left: 0; top: 23px; font: 700 42px/38px "Liberation Sans", sans-serif; }
.water span { position: absolute; left: 0; top: 64px; font: 20px/22px "Noto Sans", sans-serif; color: #fff; }
.water i { position: absolute; left: 74px; top: 4px; width: 12px; height: 18px; border-radius: 50%; background: #aaa; }
.water i + i { left: 90px; }
```
